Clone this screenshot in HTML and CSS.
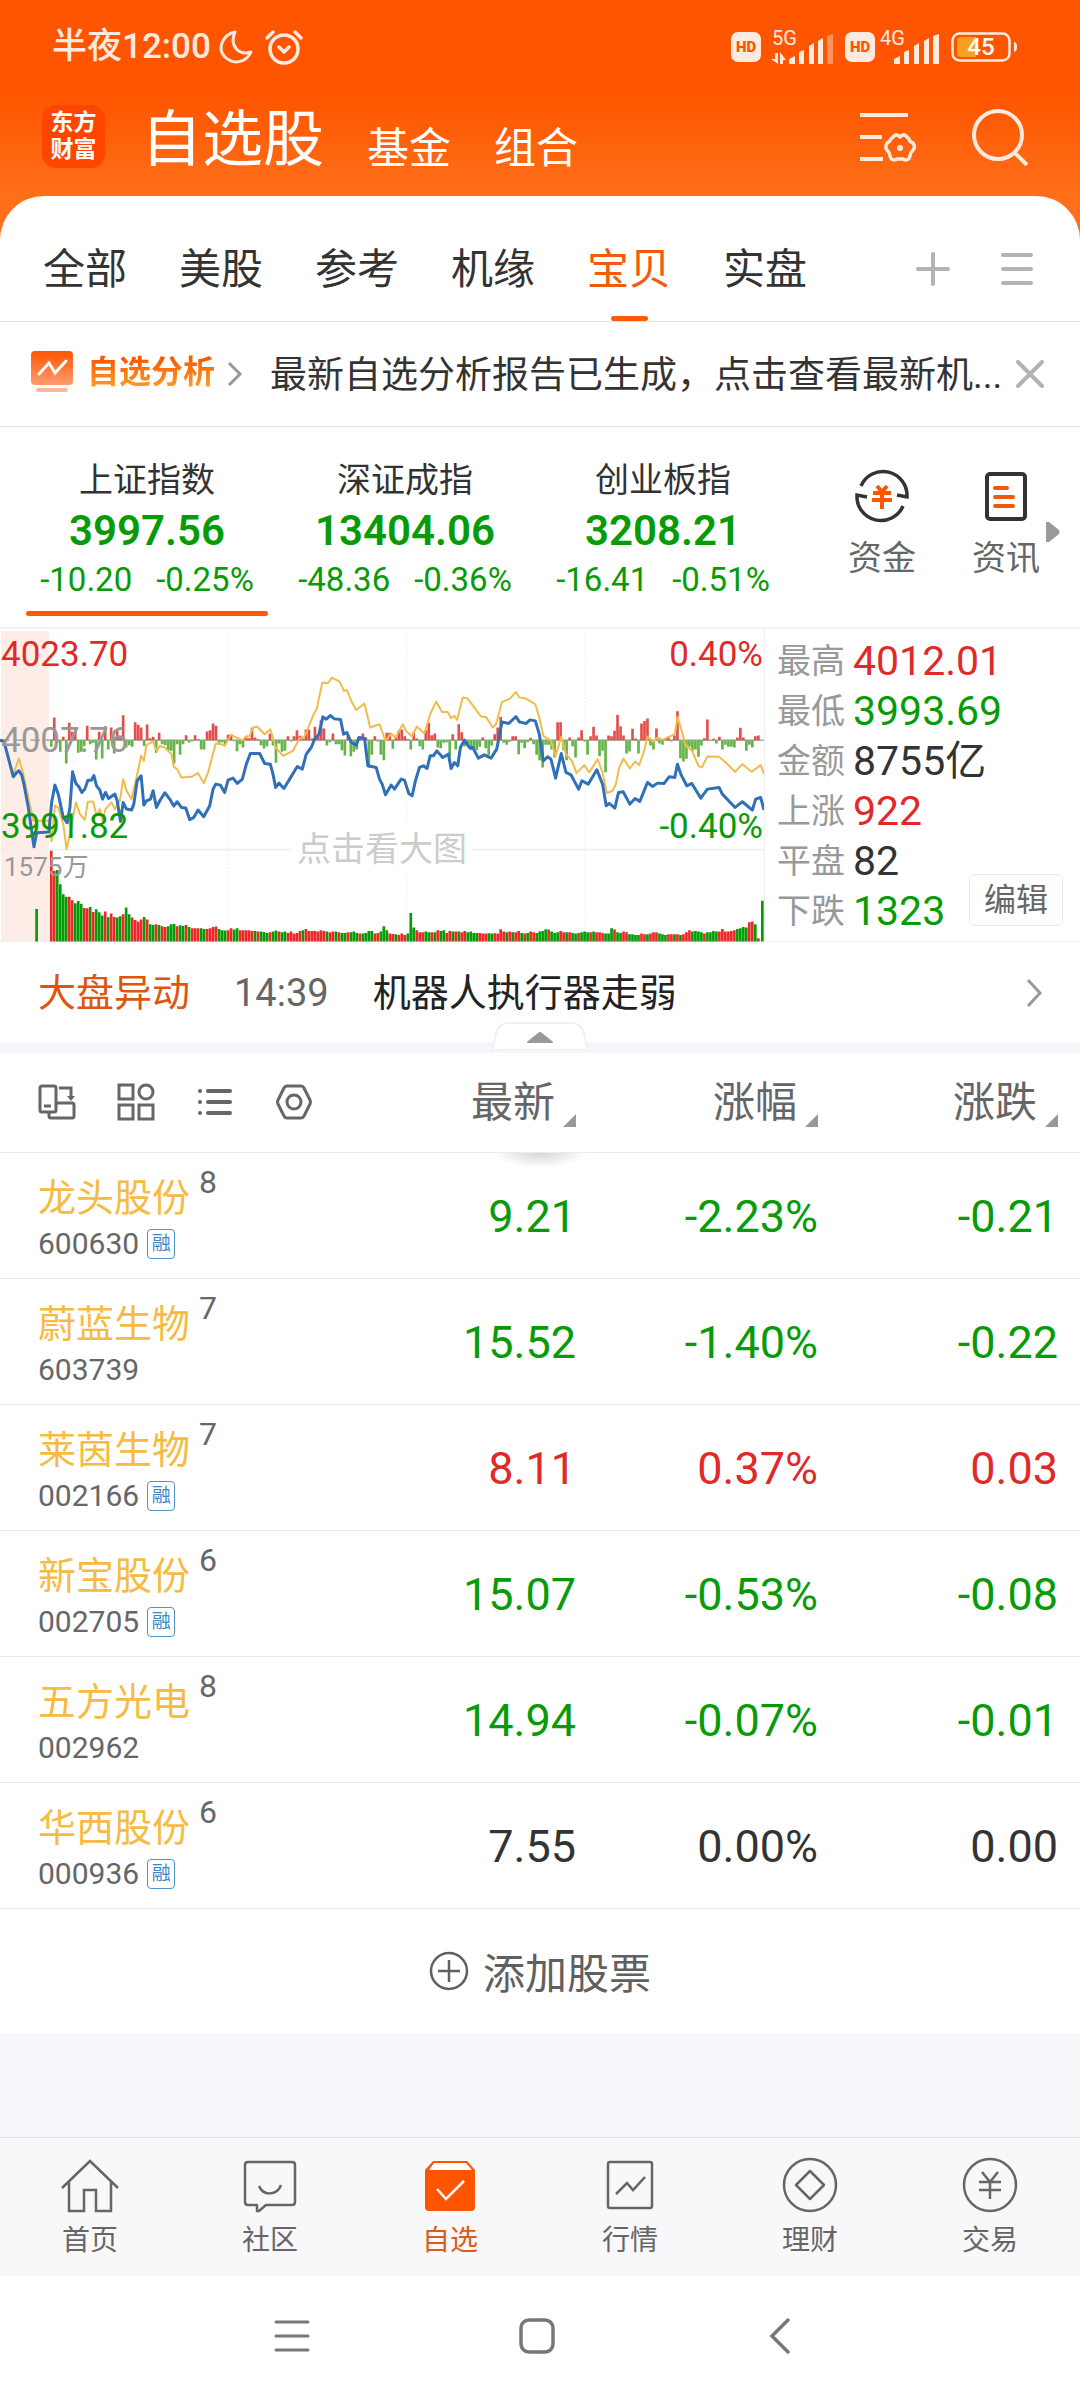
FILE: index.html
```html
<!DOCTYPE html>
<html lang="zh-CN">
<head>
<meta charset="utf-8">
<meta name="viewport" content="width=device-width, initial-scale=1">
<title>自选股</title>
<link rel="stylesheet" href="styles.css">
</head>
<body>
<header class="top">
  <div class="status">
    <span class="clock">半夜12:00</span>
    <svg class="moon" width="34" height="36" viewBox="0 0 34 36" fill="none" stroke="currentColor" stroke-width="3" stroke-linejoin="round"><path d="M16 3C3 6-2 20 6 28c8 8 21 6 26-5C20 27 10 17 16 3Z"/></svg>
    <svg width="38" height="36" viewBox="0 0 38 36" fill="none" stroke="currentColor" stroke-width="3.5" stroke-linecap="round" stroke-linejoin="round"><circle cx="19" cy="20" r="14"/><path d="M14 18l5 5 5-5M2 9l6-6M36 9l-6-6"/></svg>
    <span class="status-right">
      <span class="hd">HD</span>
      <span class="network network-5g"><span>5G</span><svg width="62" height="36" viewBox="0 0 62 36" fill="currentColor"><path d="M4 24h3v11L0 30h4ZM9 23v12h3v-4h3Z"/><path d="M18 30l6-3v8h-6ZM28 23l5-2v14h-5ZM38 17l5-3v21h-5ZM47 12l5-3v26h-5Z"/><path d="M56 7l6-2v30h-6Z" opacity=".4"/></svg></span>
      <span class="hd">HD</span>
      <span class="network network-4g"><span>4G</span><svg width="60" height="36" viewBox="0 0 60 36" fill="currentColor"><path d="M15 30l6-3v8h-6ZM25 23l5-2v14h-5ZM35 17l5-3v21h-5ZM45 12l5-3v26h-5ZM54 7l6-2v30h-6Z"/></svg></span>
      <svg width="67" height="30" viewBox="0 0 67 30"><rect x="1.5" y="1.5" width="57" height="27" rx="7" fill="none" stroke="currentColor" stroke-width="2.5"/><path d="M10 5h15v20H10a4 4 0 0 1-4-4V9a4 4 0 0 1 4-4Z" fill="#f5a020"/><path d="M63 10c4 0 4 10 0 10Z" fill="currentColor"/><text x="30" y="23" text-anchor="middle" class="charge">45</text></svg>
    </span>
  </div>
  <div class="titlebar">
    <a class="logo" href="#">东方<br>财富</a>
    <h1 class="title">自选股</h1>
    <a class="section" href="#">基金</a>
    <a class="section" href="#">组合</a>
    <button class="icon-button settings" aria-label="设置"><svg width="57" height="58" viewBox="0 0 57 58" fill="none" stroke="currentColor" stroke-width="4"><path d="M0 7h48M0 29h22M0 51h23"/><path stroke-width="3.5" stroke-linejoin="round" d="M34 28c2-2 4-1 6 1 2-2 4-3 6-1l3 3c0 3 2 3 4 4 2 3 2 5 0 7-2 2-3 3-3 6-1 4-4 5-7 3h-6c-3 2-6 1-7-3 0-3-1-4-3-6-2-2-1-5 0-7 2-1 3-2 4-4Z"/><circle cx="40" cy="40" r="3" fill="currentColor" stroke="none"/></svg></button>
    <button class="icon-button" aria-label="搜索"><svg width="58" height="58" viewBox="0 0 58 58" fill="none" stroke="currentColor" stroke-width="4"><circle cx="27" cy="27" r="24"/><path d="M43 44l13 13"/></svg></button>
  </div>
</header>

<main class="panel">
  <nav class="groups">
    <a href="#">全部</a><a href="#">美股</a><a href="#">参考</a><a href="#">机缘</a><a href="#" class="active">宝贝</a><a href="#">实盘</a>
    <span class="group-tools">
      <button class="icon-button" aria-label="添加分组"><svg width="36" height="36" viewBox="0 0 36 36" stroke="currentColor" stroke-width="4" stroke-linecap="round"><path d="M3 18h30M18 3v30"/></svg></button>
      <button class="icon-button" aria-label="分组列表"><svg width="36" height="36" viewBox="0 0 36 36" stroke="currentColor" stroke-width="4" stroke-linecap="round"><path d="M4 4h28M4 18h28M4 32h28"/></svg></button>
    </span>
  </nav>

  <section class="analysis">
    <svg width="42" height="42" viewBox="0 0 42 42"><defs><linearGradient id="badge" x1="0" y1="0" x2="0" y2="1"><stop offset="0" stop-color="#ff5500"/><stop offset="1" stop-color="#ff9c70"/></linearGradient></defs><rect width="42" height="34" rx="4" fill="url(#badge)"/><path d="M8 23l10-11 6 10 11-12" fill="none" stroke="#fff" stroke-width="3" stroke-linecap="round"/><path d="M7 39h28" stroke="#f9b898" stroke-width="4" stroke-linecap="round"/></svg>
    <a class="analysis-name" href="#">自选分析</a>
    <svg class="chevron" width="16" height="26" viewBox="0 0 16 26" fill="none" stroke="#999" stroke-width="3"><path d="M2 2l11 11L2 24"/></svg>
    <p class="analysis-text">最新自选分析报告已生成，点击查看最新机...</p>
    <button class="icon-button" aria-label="关闭"><svg width="28" height="28" viewBox="0 0 28 28" stroke="currentColor" stroke-width="4" stroke-linecap="round"><path d="M2 2l24 24M26 2L2 26"/></svg></button>
  </section>

  <section class="indices">
    <a class="index selected" href="#"><span class="index-name">上证指数</span><strong>3997.56</strong><span class="change"><span>-10.20</span><span>-0.25%</span></span></a>
    <a class="index" href="#"><span class="index-name">深证成指</span><strong>13404.06</strong><span class="change"><span>-48.36</span><span>-0.36%</span></span></a>
    <a class="index" href="#"><span class="index-name">创业板指</span><strong>3208.21</strong><span class="change"><span>-16.41</span><span>-0.51%</span></span></a>
    <div class="shortcuts">
      <a class="shortcut" href="#"><svg width="54" height="54" viewBox="0 0 54 54" fill="none" stroke="#333" stroke-width="3.5"><path d="M6 17a24 24 0 0 1 46 11l-10-2M48 37A24 24 0 0 1 2 26l10 2"/><path d="M22 17l5 6 5-6M18 24h18M17 31h20M27 24v16" stroke="#ff5500" stroke-width="4"/></svg>资金</a>
      <a class="shortcut" href="#"><svg width="54" height="54" viewBox="0 0 54 54" fill="none" stroke="#333" stroke-width="4"><rect x="8" y="5" width="38" height="45" rx="3"/><path d="M16 19h12M16 28h18M16 37h18" stroke="#f05a10" stroke-linecap="round"/></svg>资讯</a>
      <svg class="more" width="14" height="20" viewBox="0 0 14 20" fill="#999"><path d="M0 0h3l10 8q1 2 0 4L3 20H0Z"/></svg>
    </div>
  </section>

  <section class="market">
    <div class="chart">
      <svg class="plot" viewBox="0 24 2295 939" preserveAspectRatio="none">
        <rect x="3" y="30" width="144" height="933" fill="#fdede6"/>
        <path d="M684 30V963M1221 30V963M1758 30V963" stroke="#ececec" stroke-width="4" stroke-dasharray="4 6"/>
        <path d="M0 687H2295" stroke="#efefef" stroke-width="5"/>
        <path d="M0 358H160" stroke="#999" stroke-width="4" stroke-dasharray="28 18"/>
        <path d="M150 358H2295" stroke="#999" stroke-width="4"/>
        <path id="up" fill="#e34f4b"/><path id="down" fill="#63b548"/>
        <path id="volume-up" fill="#ee2828"/><path id="volume-down" fill="#049c04"/>
        <polyline id="average" fill="none" stroke="#f0bd4c" stroke-width="6" stroke-linejoin="round"/>
        <polyline id="price" fill="none" stroke="#2f70b8" stroke-width="9" stroke-linejoin="round"/>
      </svg>
      <div class="scale">
        <div class="scale-row rise"><span>4023.70</span><span>0.40%</span></div>
        <div class="scale-row middle"><span>4007.76</span></div>
        <div class="scale-row fall"><span>3991.82</span><span>-0.40%</span></div>
      </div>
      <span class="volume-max">1575万</span>
      <span class="enlarge">点击看大图</span>
    </div>
    <div class="facts">
      <dl>
        <div><dt>最高</dt><dd class="rise">4012.01</dd></div>
        <div><dt>最低</dt><dd class="fall">3993.69</dd></div>
        <div><dt>金额</dt><dd>8755亿</dd></div>
        <div><dt>上涨</dt><dd class="rise">922</dd></div>
        <div><dt>平盘</dt><dd>82</dd></div>
        <div><dt>下跌</dt><dd class="fall">1323</dd></div>
      </dl>
      <button class="edit">编辑</button>
    </div>
  </section>

  <section class="news">
    <a class="news-kind" href="#">大盘异动</a>
    <time>14:39</time>
    <a class="news-title" href="#">机器人执行器走弱</a>
    <svg width="16" height="30" viewBox="0 0 16 30" fill="none" stroke="#999" stroke-width="3"><path d="M2 2l12 13L2 28"/></svg>
    <button class="collapse" aria-label="收起"><svg width="98" height="29" viewBox="0 0 98 29"><path d="M1 28L5 11Q8 1 18 1H80Q90 1 93 11L97 28Z" fill="#fff" stroke="#f0f1f3" stroke-width="2"/><path d="M37 21q-2-1 0-2l10-8q2-2 4 0l10 8q2 1 0 2Z" fill="#999"/></svg></button>
  </section>

  <table class="stocks">
    <colgroup><col><col class="col-value"><col class="col-value"><col class="col-last"></colgroup>
    <thead>
      <tr>
        <th>
          <span class="tools">
            <button class="icon-button" aria-label="横屏"><svg width="38" height="38" viewBox="0 0 38 38" fill="none" stroke="currentColor" stroke-width="3"><rect x="2" y="3" width="16" height="26" rx="2"/><path d="M6 23h7M11 29v4q0 2 2 2h21q2 0 2-2V22q0-2-2-2H18M21 5h12v10"/><path d="M29 13h8l-4 5Z" fill="currentColor" stroke="none"/></svg></button>
            <button class="icon-button" aria-label="宫格"><svg width="38" height="38" viewBox="0 0 38 38" fill="none" stroke="currentColor" stroke-width="3"><rect x="2" y="2" width="14" height="14"/><circle cx="29" cy="9" r="7"/><rect x="2" y="22" width="14" height="14"/><rect x="22" y="22" width="14" height="14"/></svg></button>
            <button class="icon-button" aria-label="列表"><svg width="38" height="38" viewBox="0 0 38 38" fill="none" stroke="currentColor" stroke-width="4" stroke-linecap="round"><path d="M12 8h22M12 19h22M12 30h22M4 8h0M4 19h0M4 30h0"/></svg></button>
            <button class="icon-button" aria-label="表头设置"><svg width="38" height="38" viewBox="0 0 38 38" fill="none" stroke="currentColor" stroke-width="3" stroke-linejoin="round"><path d="M12 3h14q2 0 3 2l6 12q1 2 0 4l-6 12q-1 2-3 2H12q-2 0-3-2L3 21q-1-2 0-4L9 5q1-2 3-2Z"/><circle cx="19" cy="19" r="7"/></svg></button>
          </span>
        </th>
        <th><button class="sort">最新</button></th>
        <th><button class="sort">涨幅</button></th>
        <th><button class="sort">涨跌</button></th>
      </tr>
    </thead>
    <tbody>
      <tr class="fall"><td><span class="name">龙头股份<sup>8</sup></span><span class="code">600630<i>融</i></span></td><td>9.21</td><td>-2.23%</td><td>-0.21</td></tr>
      <tr class="fall"><td><span class="name">蔚蓝生物<sup>7</sup></span><span class="code">603739</span></td><td>15.52</td><td>-1.40%</td><td>-0.22</td></tr>
      <tr class="rise"><td><span class="name">莱茵生物<sup>7</sup></span><span class="code">002166<i>融</i></span></td><td>8.11</td><td>0.37%</td><td>0.03</td></tr>
      <tr class="fall"><td><span class="name">新宝股份<sup>6</sup></span><span class="code">002705<i>融</i></span></td><td>15.07</td><td>-0.53%</td><td>-0.08</td></tr>
      <tr class="fall"><td><span class="name">五方光电<sup>8</sup></span><span class="code">002962</span></td><td>14.94</td><td>-0.07%</td><td>-0.01</td></tr>
      <tr><td><span class="name">华西股份<sup>6</sup></span><span class="code">000936<i>融</i></span></td><td>7.55</td><td>0.00%</td><td>0.00</td></tr>
    </tbody>
  </table>

  <button class="add"><svg width="40" height="40" viewBox="0 0 40 40" fill="none" stroke="currentColor" stroke-width="2.5"><circle cx="20" cy="20" r="18"/><path d="M9 20h22M20 9v22"/></svg>添加股票</button>
</main>

<nav class="tabbar">
  <a href="#"><svg width="60" height="60" viewBox="0 0 60 60" fill="none" stroke="currentColor" stroke-width="2.5"><path d="M2 33L30 6l28 27M9 27v29h15V35h12v21h15V27"/></svg>首页</a>
  <a href="#"><svg width="60" height="60" viewBox="0 0 60 60" fill="none" stroke="currentColor" stroke-width="2.5" stroke-linejoin="round"><path d="M8 7h44q3 0 3 3v37q0 3-3 3H26l-7 6h-2v-6H8q-3 0-3-3V10q0-3 3-3Z"/><path d="M19 31c4 10 18 10 22-1"/></svg>社区</a>
  <a href="#" class="active"><svg width="60" height="60" viewBox="0 0 60 60"><path d="M5 15L13 6h34l8 9v37q0 4-4 4H9q-4 0-4-4Z" fill="#ff5500"/><path d="M14 8h32l6 7H9Z" fill="#fff"/><path d="M17 34l9 10 18-18" fill="none" stroke="#fff" stroke-width="2.5"/></svg>自选</a>
  <a href="#"><svg width="60" height="60" viewBox="0 0 60 60" fill="none" stroke="currentColor" stroke-width="2.5"><rect x="8" y="7" width="44" height="46" rx="2"/><path d="M16 39l11-11 6 7 12-13"/></svg>行情</a>
  <a href="#"><svg width="60" height="60" viewBox="0 0 60 60" fill="none" stroke="currentColor" stroke-width="2.5" stroke-linejoin="round"><circle cx="30" cy="30" r="26"/><path d="M30 16l14 14-14 14-14-14Z"/></svg>理财</a>
  <a href="#"><svg width="60" height="60" viewBox="0 0 60 60" fill="none" stroke="currentColor" stroke-width="2.5"><circle cx="30" cy="30" r="26"/><path d="M22 17l8 10 8-10M19 27h22M19 35h22M30 27v17"/></svg>交易</a>
</nav>

<nav class="system">
  <button class="icon-button" aria-label="最近任务"><svg width="40" height="40" viewBox="0 0 40 40" stroke="currentColor" stroke-width="3" stroke-linecap="round"><path d="M4 6h32M4 20h32M4 34h32"/></svg></button>
  <button class="icon-button" aria-label="主屏幕"><svg width="40" height="40" viewBox="0 0 40 40" fill="none" stroke="currentColor" stroke-width="3.5"><rect x="4" y="4" width="32" height="32" rx="8"/></svg></button>
  <button class="icon-button" aria-label="返回"><svg width="40" height="40" viewBox="0 0 40 40" fill="none" stroke="currentColor" stroke-width="3.5" stroke-linecap="round"><path d="M26 4L10 20l16 16"/></svg></button>
</nav>
<script src="chart.js"></script>
</body>
</html>
```
FILE: styles.css
```css
* { box-sizing: border-box; }

body {
  margin: 0;
  min-height: 100vh;
  display: flex;
  flex-direction: column;
  background: #f6f7fa;
  color: #333;
  font-family: Roboto, "Noto Sans CJK SC", sans-serif;
  font-size: 42px;
}

a { color: inherit; text-decoration: none; }
button { font: inherit; color: inherit; border: 0; background: none; padding: 0; }
svg { display: block; flex: none; }
.icon-button { display: flex; justify-content: center; }
.rise { color: #e02a2a; }
.fall { color: #079b07; }

/* Orange header */
.top {
  background: linear-gradient(#ff5500 0, #ff5500 95px, #ff6e18 190px, #ff6e18);
  padding-bottom: 48px;
  margin-bottom: -48px;
}
.status {
  display: flex;
  align-items: center;
  height: 94px;
  padding: 0 62px 0 52px;
  color: #ffeae0;
}
.clock { font-size: 35px; font-weight: 500; line-height: 48px; }
.moon { margin: 0 12px 0 8px; }
.status-right { display: flex; align-items: center; margin-left: auto; }
.hd {
  width: 30px;
  height: 30px;
  border-radius: 7px;
  background: #ffeae0;
  color: #ff5500;
  text-align: center;
  font-size: 15px;
  font-weight: 900;
  line-height: 30px;
}
.network { position: relative; font-size: 20px; line-height: 20px; }
.network span { position: absolute; left: 1px; top: -1px; }
.network-5g { margin: 0 12px 0 10px; }
.network-4g { margin: 0 12px 0 4px; }
.charge { font-size: 24px; font-weight: 500; fill: #fff; }
.titlebar {
  display: flex;
  align-items: flex-end;
  height: 102px;
  padding: 0 51px 18px 42px;
  color: #fff;
}
.logo {
  width: 63px;
  height: 63px;
  margin: 0 36px 10px 0;
  padding-top: 4px;
  border-radius: 14px;
  background: #ff4500;
  text-align: center;
  font-size: 23px;
  font-weight: 700;
  line-height: 27px;
}
.title { margin: 0; font-size: 61px; font-weight: 400; line-height: 76px; }
.section { margin-left: 43px; line-height: 58px; }
.settings { margin: 0 54px 0 auto; }
.titlebar .icon-button { color: #ffeadd; padding-bottom: 12px; }

/* White panel and group tabs */
.panel { background: #fff; border-radius: 44px 44px 0 0; }
.groups {
  display: flex;
  gap: 52px;
  height: 126px;
  padding: 0 45px 0 43px;
  border-bottom: 1px solid #e3e3e3;
}
.groups a {
  display: flex;
  flex-direction: column;
  align-items: center;
  justify-content: space-between;
  padding-top: 44px;
  line-height: 60px;
}
.groups .active { color: #f55a0c; }
.groups .active::after { content: ""; width: 37px; height: 5px; border-radius: 3px; background: #ff5a08; }
.group-tools { display: flex; align-items: center; gap: 48px; margin-left: auto; padding-top: 20px; color: #b3b3b3; }

.analysis {
  display: flex;
  align-items: center;
  height: 105px;
  padding: 0 36px 0 31px;
  border-bottom: 1px solid #e3e3e3;
}
.analysis > svg:first-child { margin-bottom: 4px; }
.analysis-name {
  margin: 0 12px 4px 14px;
  font-size: 32px;
  font-weight: 700;
  line-height: 48px;
  background: linear-gradient(#ff5500 20%, #ff9a20 80%);
  background-clip: text;
  color: transparent;
}
.analysis-text {
  flex: 1;
  margin: 4px 0 0 27px;
  white-space: nowrap;
  font-size: 37px;
  line-height: 56px;
}
.analysis .icon-button { color: #b3b3b3; }

/* Index summary */
.indices {
  display: flex;
  height: 200px;
  padding: 0 12px 0 18px;
}
.index {
  flex: 1;
  display: flex;
  flex-direction: column;
  align-items: center;
  padding: 29px 8px 0;
}
.index-name { font-size: 34px; line-height: 48px; }
.index strong { font-size: 42px; font-weight: 600; line-height: 54px; color: #079b07; }
.change { display: flex; gap: 24px; font-size: 33px; line-height: 44px; color: #079b07; }
.selected::after { content: ""; align-self: stretch; height: 5px; margin-top: 9px; border-radius: 3px; background: #ff5a08; }
.shortcuts { display: flex; align-items: flex-start; margin-left: 28px; padding-top: 42px; }
.shortcut {
  display: flex;
  flex-direction: column;
  align-items: center;
  gap: 11px;
  width: 124px;
  font-size: 34px;
  line-height: 48px;
  color: #666;
}
.more { margin: 53px 8px 0 -22px; }

/* Market chart and figures */
.market {
  display: grid;
  grid-template-columns: 17fr 7fr;
  height: 315px;
  border-top: 2px solid #f3f3f3;
  border-bottom: 1px solid #f0f0f0;
}
.chart { position: relative; border-right: 1px solid #f0f0f0; }
.plot { width: 100%; height: 100%; }
.scale {
  position: absolute;
  inset: 4px 1px auto 1px;
  display: flex;
  flex-direction: column;
  gap: 43px;
  font-size: 35px;
  line-height: 43px;
}
.scale-row { display: flex; justify-content: space-between; }
.middle { color: #999; }
.volume-max { position: absolute; left: 4px; top: 220px; font-size: 26px; line-height: 36px; color: #999; }
.enlarge {
  position: absolute;
  left: 50%;
  top: 196px;
  transform: translateX(-50%);
  padding: 0 6px;
  background: #fff;
  font-size: 34px;
  line-height: 48px;
  color: #ccc;
  white-space: nowrap;
}
.facts { display: flex; justify-content: space-between; padding: 7px 17px 0 12px; }
.facts dl { margin: 0; }
.facts dl > div { display: flex; align-items: center; gap: 8px; height: 50px; }
.facts dt { font-size: 34px; color: #999; line-height: 50px; }
.facts dd { margin: 0; font-size: 41px; line-height: 50px; white-space: nowrap; }
.edit {
  align-self: flex-end;
  flex: none;
  width: 94px;
  height: 52px;
  margin: 0 0 16px -40px;
  border: 1px solid #e8e8e8;
  border-radius: 6px;
  font-size: 32px;
  line-height: 48px;
  color: #666;
}

/* Headline */
.news {
  position: relative;
  display: flex;
  align-items: center;
  height: 111px;
  padding: 0 38px 11px;
  border-bottom: 11px solid #f5f7fa;
  font-size: 38px;
  line-height: 56px;
}
.news-kind { color: #dd560e; }
.news time { margin: 0 44px; color: #666; }
.news-title { flex: 1; color: #222; }
.news > svg { margin-top: 12px; }
.news-kind, .news time, .news-title { padding-top: 13px; }
.collapse { position: absolute; left: 50%; bottom: -9px; transform: translateX(-50%); }

/* Stock table */
.stocks { width: 100%; border-collapse: collapse; table-layout: fixed; }
.col-value { width: 242px; }
.col-last { width: 262px; }
.stocks th, .stocks td { padding: 0; border-bottom: 1px solid #ebebeb; font-weight: 400; }
.stocks th { height: 99px; color: #666; text-align: right; }
.stocks th:last-child, .stocks td:last-child { padding-right: 22px; }
.tools { display: flex; gap: 41px; padding-left: 38px; }
.sort { position: relative; padding: 2px 21px 0 0; line-height: 60px; }
.sort::after {
  content: "";
  position: absolute;
  right: 0;
  bottom: 6px;
  border-left: 13px solid transparent;
  border-bottom: 13px solid #97979d;
}
.stocks tbody tr:first-child { background: radial-gradient(48px 16px at 50% 0, #d4d4d4, #fff); }
.stocks td { height: 126px; padding-top: 4px; text-align: right; font-size: 45px; line-height: 56px; }
.stocks td:first-child { padding: 15px 0 0 38px; text-align: left; vertical-align: top; }
.name { display: flex; gap: 9px; font-size: 38px; line-height: 60px; color: #f6bb42; }
.name sup { font-size: 32px; line-height: 28px; color: #666; }
.code { display: flex; align-items: center; gap: 8px; font-size: 30px; line-height: 32px; color: #666; }
.code i {
  width: 28px;
  height: 30px;
  border: 1px solid #4c93cc;
  border-radius: 4px;
  text-align: center;
  font-size: 19px;
  font-style: normal;
  line-height: 27px;
  color: #3d88c6;
}
.add {
  display: flex;
  align-items: center;
  justify-content: center;
  gap: 14px;
  width: 100%;
  height: 124px;
  color: #606060;
}

/* Bottom bars */
.tabbar {
  display: flex;
  height: 139px;
  margin-top: auto;
  border-top: 1px solid #e3e4e6;
  background: #f8f8fb;
}
.tabbar a {
  flex: 1;
  display: flex;
  flex-direction: column;
  align-items: center;
  gap: 5px;
  padding-top: 17px;
  font-size: 28px;
  line-height: 42px;
  color: #666;
}
.tabbar .active { color: #dd5a18; }
.system {
  display: flex;
  align-items: center;
  height: 124px;
  padding: 0 176px 4px 170px;
  background: #fff;
  color: #777;
}
.system button { flex: 1; }
```
FILE: chart.js
```js
// Each minute is one step of 9 units; positive values are red, negative green.
const step = 9;
const start = 150;

const momentum = [
  -20, 68, -8, -35, 10, -70, 52, 25, 38, -38, -35, -18, 43, -12, -8, -58, 25, -55, 42, -28,
  38, -40, 33, 8, 75, -22, -15, -20, 54, 46, 38, -18, 47, 6, 10, -38, 22, -12, -15, -32,
  -32, -70, -12, -44, -12, 15, -7, -4, 15, 3, -28, -28, 26, 30, 50, 43, -8, -6, -14, 16,
  18, -3, -33, -12, -22, 12, 6, 37, 8, 3, -15, -25, -18, 20, -16, -68, -10, -35, -32, 12,
  -4, 12, 30, 13, 10, 32, 32, 5, 40, 12, 60, 35, -16, -6, 20, -12, -12, -30, -46, 14,
  -48, -35, -28, 5, 20, 8, -82, -44, 12, -4, -44, -60, 22, 22, -26, 8, 28, 32, 12, 3,
  -28, 25, 5, -18, -28, 30, 52, 15, 20, -22, -24, -8, -6, -50, 18, -28, 48, 24, -18, -14,
  -30, -24, -30, -20, 8, -24, -45, -16, 18, 38, 70, -8, -14, -5, 12, 12, -42, -8, -24, -6,
  7, -12, -44, -60, -82, -14, -14, -28, -52, 54, 54, -30, -60, 8, -18, -52, 8, 30, -4, -44,
  12, 40, 14, -48, -32, -96, 14, 12, 28, 76, 42, 14, -40, -34, 34, 5, -40, 50, 58, 65,
  -16, -28, 35, -10, -14, 6, 12, -4, 14, 87, -54, -64, -56, -20, -34, -28, -50, -16, 6, 62,
  -2, 4, -10, 10, -28, -14, -20, -20, -22, 8, 37, 8, -32, -14, -22, 12, 14, 0
];

const volume = [
  273, 213, -215, -172, -142, -135, 135, 124, -115, -122, -114, 101, 100, -104, 89, -97, -88, -78, 90, -73,
  84, 74, -72, -76, 82, -102, -82, 72, 65, 60, 66, -74, 66, -52, -50, 52, -50, 46, 44, -46,
  -52, -53, 46, -49, -47, 50, -44, 40, 40, 40, -40, -38, 38, 40, 44, 45, -38, -34, -33, 34,
  40, -36, -40, 34, 34, 34, 34, 32, -32, 30, -30, -29, -26, 28, -30, -33, 30, -28, -30, 26,
  30, 24, 26, 32, -34, 38, 32, 32, 32, 30, 34, 32, -30, 28, 30, -30, 28, -26, -26, 28,
  -28, -30, -26, 24, -24, -26, -32, -32, 24, 26, -30, -46, -34, 24, 23, -22, 20, 24, 20, -24,
  -86, -42, 34, 28, 28, -30, -28, 28, -28, 34, -32, -34, 26, 32, -30, 30, -30, 28, 32, -28,
  -30, -26, -26, 26, 24, 24, -25, -24, 25, 24, 37, 30, -28, 30, -28, 28, 32, -26, 24, -26,
  30, 28, -26, -30, -32, -37, 36, -30, -26, -28, 32, 28, -28, 28, -26, -24, 26, -28, -30, -28,
  28, -30, 28, 28, 26, -24, -24, -40, 36, -28, -26, 30, 28, -22, -22, -20, -20, 24, 22, -22,
  24, 28, 28, -24, -22, -20, 22, 22, -22, 22, -20, 22, 28, 34, -30, -32, -30, -28, 24, -28,
  -28, -32, -30, 30, 38, 30, 30, 32, 34, -38, -40, -44, -42, 58, 60, -52, -68, 80
];

const price = "0,358 12,362 40,468 50,455 57,450 65,462 72,490 85,560 102,678 110,636 147,634 155,545 165,493 175,520 190,590 202,606 210,560 218,453 228,488 237,498 246,515 255,505 264,478 275,478 282,464 290,495 300,508 308,535 317,515 326,533 345,520 352,540 362,602 370,545 380,565 395,568 402,550 412,480 424,465 432,553 440,540 452,535 460,510 470,560 480,540 495,516 510,535 522,556 532,543 545,560 558,562 570,597 582,590 595,568 612,588 630,555 640,505 648,490 662,493 675,515 685,478 700,472 713,488 728,475 740,430 752,398 780,398 795,428 812,430 820,460 828,500 838,487 853,503 870,475 893,437 908,445 920,400 935,380 945,355 958,340 970,288 980,295 992,284 1005,294 1023,296 1032,340 1042,335 1055,365 1070,373 1078,350 1095,352 1105,435 1130,440 1140,475 1148,490 1158,522 1175,493 1185,505 1205,475 1215,478 1228,518 1238,525 1248,480 1260,440 1272,435 1283,443 1292,405 1302,405 1312,390 1330,410 1347,400 1355,443 1365,425 1375,435 1383,380 1395,358 1410,380 1420,380 1437,412 1455,402 1475,412 1492,385 1508,303 1528,308 1550,287 1560,303 1580,308 1592,297 1608,300 1620,340 1632,420 1645,408 1655,415 1669,472 1686,398 1700,455 1715,462 1738,505 1748,480 1767,490 1793,447 1810,490 1821,555 1830,548 1847,562 1858,515 1872,513 1892,550 1908,533 1922,542 1945,485 1960,497 1975,487 1995,488 2010,468 2027,470 2035,430 2045,460 2063,495 2078,488 2105,532 2125,505 2160,500 2170,520 2208,560 2230,543 2260,568 2270,535 2285,530 2295,568";

const average = "0,358 12,362 40,460 57,413 70,460 85,530 100,600 147,600 155,662 165,555 175,560 190,610 200,685 210,640 228,545 240,580 255,597 264,543 280,542 290,585 300,565 308,600 317,565 335,545 345,565 360,540 370,475 380,510 395,535 408,480 424,405 432,420 440,372 460,362 470,390 480,375 495,380 515,400 522,438 532,445 545,470 575,468 595,457 612,487 625,455 648,368 665,370 675,375 693,342 728,358 740,347 750,345 760,320 772,317 795,340 812,325 828,380 850,405 880,390 900,352 912,352 920,335 940,285 952,262 968,185 985,187 997,170 1020,182 1033,210 1042,207 1055,240 1070,267 1095,248 1112,320 1140,310 1158,360 1175,338 1188,350 1210,310 1220,330 1238,347 1252,317 1275,338 1292,280 1310,242 1328,273 1345,273 1355,292 1365,285 1373,297 1390,230 1405,233 1445,287 1460,288 1480,320 1490,310 1508,243 1532,233 1550,213 1560,230 1580,233 1608,250 1620,290 1632,345 1655,360 1669,405 1686,348 1700,400 1718,420 1732,457 1755,433 1770,455 1795,415 1810,455 1823,517 1840,510 1850,490 1860,440 1873,413 1892,443 1908,422 1920,433 1935,390 1945,347 1962,362 1975,350 1990,357 2027,340 2035,288 2045,320 2060,375 2078,388 2098,435 2108,440 2125,407 2160,408 2180,425 2208,453 2230,430 2258,453 2285,433 2295,460";

const bar = (x, base, value) => `M${x} ${base}h${step - 1}v${-value}h${1 - step}Z`;

const bars = (data, base, keep) =>
  data.map((v, i) => keep(v) ? bar(start + i * step, base, v) : "").join("");

const set = (id, name, value) => document.getElementById(id).setAttribute(name, value);

// The opening auction and the closing auction stand apart from the minute bars.
const auctions = bar(106, 963, 98) + bar(2286, 963, 123);
const rising = v => v > 0;

set("up", "d", bars(momentum, 358, rising));
set("down", "d", bars(momentum, 358, v => v < 0));
set("volume-up", "d", bars(volume.map(v => Math.max(v, 0)).slice(0, 236), 963, rising) + bar(2274, 963, 10));
set("volume-down", "d", bars(volume.map(v => Math.max(-v, 0)).slice(0, 236), 963, rising) + auctions);
set("price", "points", price);
set("average", "points", average);
```
